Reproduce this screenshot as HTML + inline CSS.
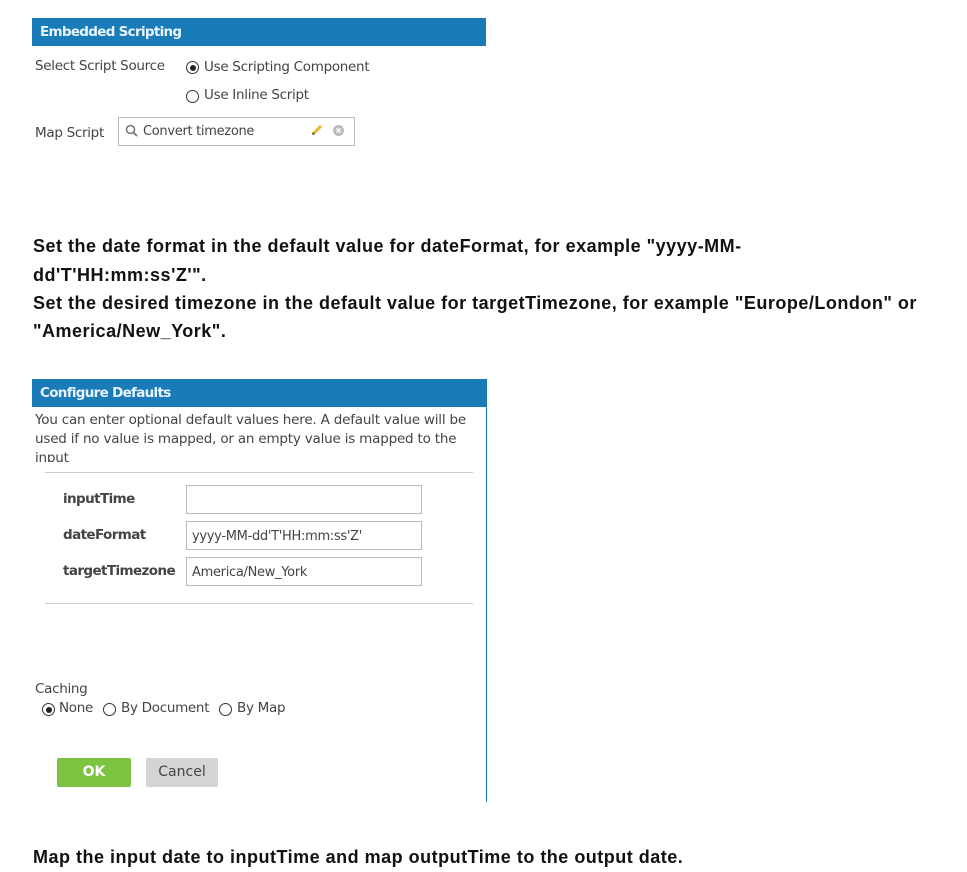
<!DOCTYPE html>
<html><head><meta charset="utf-8"><style>
body{margin:0;width:967px;height:872px;background:#fff;position:relative;font-family:"DejaVu Sans","Liberation Sans",sans-serif;overflow:hidden}
.a{position:absolute;white-space:nowrap}
.hdr{position:absolute;left:32px;width:454px;height:28px;background:#1a7bb9;color:#e8f4ff;font-weight:bold;font-size:13.5px;line-height:28px;padding-left:8px;box-sizing:border-box;letter-spacing:-0.7px}
.s{font-size:13.5px;color:#444;letter-spacing:-0.3px}
.rad{position:absolute;width:13px;height:13px;border:1px solid #333;border-radius:50%;box-sizing:border-box}
.rad.on::after{content:"";position:absolute;left:2.5px;top:2.5px;width:6px;height:6px;border-radius:50%;background:#222}
.inp{position:absolute;border:1px solid #bbb;background:#fff;box-sizing:border-box;font-size:13px;color:#444;padding-left:5px;line-height:26px;letter-spacing:-0.3px}
.p{font-family:"Liberation Sans",sans-serif;font-weight:bold;font-size:18px;color:#111;letter-spacing:0.5px}
.lbl{font-weight:bold;font-size:13.5px;color:#444;letter-spacing:-0.6px}
</style></head><body>
<div class="hdr" style="top:18px">Embedded Scripting</div>
<div class="a s" style="left:35px;top:58px">Select Script Source</div>
<div class="rad on" style="left:186px;top:61px"></div>
<div class="a s" style="left:204px;top:59px">Use Scripting Component</div>
<div class="rad" style="left:186px;top:90px"></div>
<div class="a s" style="left:204px;top:87px">Use Inline Script</div>
<div class="a s" style="left:35px;top:125px">Map Script</div>
<div class="inp" style="left:118px;top:117px;width:237px;height:29px;padding-left:24px;line-height:28px">Convert timezone</div>
<svg class="a" style="left:125px;top:124px" width="14" height="14"><circle cx="5.5" cy="5.5" r="4" fill="none" stroke="#777" stroke-width="1.5"/><line x1="8.5" y1="8.5" x2="12" y2="12" stroke="#777" stroke-width="1.8"/></svg>
<svg class="a" style="left:311px;top:124px" width="12" height="12"><line x1="2" y1="10" x2="10" y2="2" stroke="#e8b923" stroke-width="3"/><line x1="1.5" y1="10.5" x2="3" y2="9" stroke="#555" stroke-width="2"/></svg>
<svg class="a" style="left:332px;top:124px" width="13" height="13"><circle cx="6.5" cy="6.5" r="5.5" fill="#bbb"/><path d="M4.5 4.5l4 4M8.5 4.5l-4 4" stroke="#fff" stroke-width="1.5"/></svg>

<div class="a p" style="left:33px;top:236px">Set the date format in the default value for dateFormat, for example "yyyy-MM-</div>
<div class="a p" style="left:33px;top:265px">dd'T'HH:mm:ss'Z'".</div>
<div class="a p" style="left:33px;top:293px">Set the desired timezone in the default value for targetTimezone, for example "Europe/London" or</div>
<div class="a p" style="left:33px;top:321px">"America/New_York".</div>

<div class="hdr" style="top:379px;width:455px">Configure Defaults</div>
<div class="a" style="left:486px;top:406px;width:1px;height:396px;background:#1a7bb9"></div>
<div class="a s" style="left:35px;top:411px;width:446px;height:51px;overflow:hidden;white-space:normal;line-height:19px;font-size:13.5px;letter-spacing:-0.2px">You can enter optional default values here. A default value will be used if no value is mapped, or an empty value is mapped to the input</div>
<div class="a" style="left:45px;top:472px;width:428px;height:1px;background:#ccc"></div>
<div class="a lbl" style="left:63px;top:491px">inputTime</div>
<div class="inp" style="left:186px;top:485px;width:236px;height:29px"></div>
<div class="a lbl" style="left:63px;top:527px">dateFormat</div>
<div class="inp" style="left:186px;top:521px;width:236px;height:29px;line-height:30px">yyyy-MM-dd'T'HH:mm:ss'Z'</div>
<div class="a lbl" style="left:63px;top:563px">targetTimezone</div>
<div class="inp" style="left:186px;top:557px;width:236px;height:29px;line-height:30px">America/New_York</div>
<div class="a" style="left:45px;top:603px;width:428px;height:1px;background:#ccc"></div>

<div class="a s" style="left:35px;top:681px">Caching</div>
<div class="rad on" style="left:42px;top:703px"></div>
<div class="a s" style="left:59px;top:700px">None</div>
<div class="rad" style="left:103px;top:703px"></div>
<div class="a s" style="left:121px;top:700px">By Document</div>
<div class="rad" style="left:219px;top:703px"></div>
<div class="a s" style="left:237px;top:700px">By Map</div>
<div class="a" style="left:57px;top:758px;width:74px;height:29px;background:#7cc342;color:#fff;font-weight:bold;font-size:14px;text-align:center;line-height:29px;border-radius:2px">OK</div>
<div class="a" style="left:146px;top:758px;width:72px;height:29px;background:#d4d4d4;color:#444;font-size:14px;text-align:center;line-height:29px;border-radius:2px">Cancel</div>

<div class="a p" style="left:33px;top:847px">Map the input date to inputTime and map outputTime to the output date.</div>
</body></html>
